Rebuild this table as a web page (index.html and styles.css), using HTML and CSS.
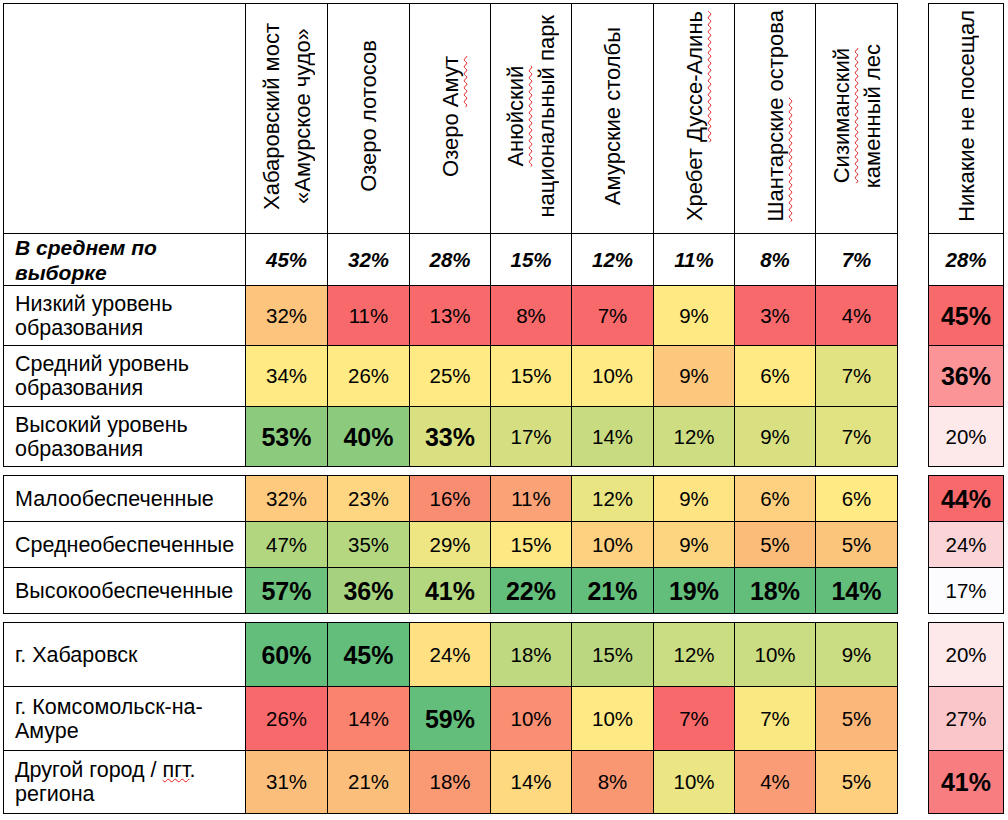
FILE: index.html
```html
<!DOCTYPE html>
<html lang="ru">
<head>
<meta charset="utf-8">
<title>Посещаемость достопримечательностей</title>
<link rel="stylesheet" href="styles.css">
</head>
<body>
<table class="grid">
  <colgroup>
    <col class="c-label">
    <col class="c-w82"><col class="c-w82"><col class="c-w81"><col class="c-w81"><col class="c-w82"><col class="c-w81"><col class="c-w81"><col class="c-w82">
    <col class="c-gap">
    <col class="c-none">
  </colgroup>
  <tr class="r-head">
    <td class="lab"></td>
    <th><div class="vt">Хабаровский мост<br>«Амурское чудо»</div></th>
    <th><div class="vt">Озеро лотосов</div></th>
    <th><div class="vt">Озеро <span class="spell">Амут</span></div></th>
    <th><div class="vt"><span class="spell">Анюйский</span><br>национальный парк</div></th>
    <th><div class="vt">Амурские столбы</div></th>
    <th><div class="vt">Хребет <span class="spell">Дуссе-Алинь</span></div></th>
    <th><div class="vt"><span class="spell">Шантарские</span> острова</div></th>
    <th><div class="vt"><span class="spell">Сизиманский</span><br>каменный лес</div></th>
    <td class="gap"></td>
    <th><div class="vt">Никакие не посещал</div></th>
  </tr>
  <tr class="r-avg">
    <td class="lab avg">В среднем по<br>выборке</td>
    <td class="avgv">45%</td><td class="avgv">32%</td><td class="avgv">28%</td><td class="avgv">15%</td><td class="avgv">12%</td><td class="avgv">11%</td><td class="avgv">8%</td><td class="avgv">7%</td>
    <td class="gap"></td>
    <td class="avgv">28%</td>
  </tr>
  <tr class="r-60">
    <td class="lab">Низкий уровень<br>образования</td>
    <td style="background:#FDC47D">32%</td><td style="background:#F8696B">11%</td><td style="background:#F8696B">13%</td><td style="background:#F8696B">8%</td><td style="background:#F8696B">7%</td><td style="background:#FFE983">9%</td><td style="background:#F8696B">3%</td><td style="background:#F8696B">4%</td>
    <td class="gap"></td>
    <td class="b" style="background:#F8696B">45%</td>
  </tr>
  <tr class="r-61">
    <td class="lab">Средний уровень<br>образования</td>
    <td style="background:#FFEA84">34%</td><td style="background:#FFEA84">26%</td><td style="background:#FFEA84">25%</td><td style="background:#FFEA84">15%</td><td style="background:#FFEA84">10%</td><td style="background:#FDC77D">9%</td><td style="background:#FFEA84">6%</td><td style="background:#E1E383">7%</td>
    <td class="gap"></td>
    <td class="b" style="background:#FA9497">36%</td>
  </tr>
  <tr class="r-60">
    <td class="lab">Высокий уровень<br>образования</td>
    <td class="b" style="background:#8CCA7E">53%</td><td class="b" style="background:#8CCA7E">40%</td><td class="b" style="background:#D9E082">33%</td><td style="background:#D5DF82">17%</td><td style="background:#C9DB81">14%</td><td style="background:#CFDD82">12%</td><td style="background:#D9E082">9%</td><td style="background:#E1E383">7%</td>
    <td class="gap"></td>
    <td style="background:#FDE8EA">20%</td>
  </tr>
  <tr class="r-sp"><td class="sp" colspan="11"></td></tr>
  <tr class="r-46">
    <td class="lab">Малообеспеченные</td>
    <td style="background:#FECB7E">32%</td><td style="background:#FED580">23%</td><td style="background:#F98D72">16%</td><td style="background:#FBA276">11%</td><td style="background:#E9E583">12%</td><td style="background:#FEE482">9%</td><td style="background:#FDD17F">6%</td><td style="background:#FFEA84">6%</td>
    <td class="gap"></td>
    <td class="b" style="background:#F8696B">44%</td>
  </tr>
  <tr class="r-46">
    <td class="lab">Среднеобеспеченные</td>
    <td style="background:#B2D67F">47%</td><td style="background:#B4D780">35%</td><td style="background:#EDE683">29%</td><td style="background:#FEE883">15%</td><td style="background:#FDD17F">10%</td><td style="background:#FDD580">9%</td><td style="background:#FBBC7A">5%</td><td style="background:#FCC57C">5%</td>
    <td class="gap"></td>
    <td style="background:#FBD4D7">24%</td>
  </tr>
  <tr class="r-46">
    <td class="lab">Высокообеспеченные</td>
    <td class="b" style="background:#6CC17C">57%</td><td class="b" style="background:#A6D27F">36%</td><td class="b" style="background:#B3D77F">41%</td><td class="b" style="background:#63BE7B">22%</td><td class="b" style="background:#63BE7B">21%</td><td class="b" style="background:#63BE7B">19%</td><td class="b" style="background:#63BE7B">18%</td><td class="b" style="background:#63BE7B">14%</td>
    <td class="gap"></td>
    <td style="background:#FCFCFF">17%</td>
  </tr>
  <tr class="r-sp"><td class="sp" colspan="11"></td></tr>
  <tr class="r-64">
    <td class="lab">г. Хабаровск</td>
    <td class="b" style="background:#63BE7B">60%</td><td class="b" style="background:#63BE7B">45%</td><td style="background:#FFE082">24%</td><td style="background:#BFD980">18%</td><td style="background:#BBD880">15%</td><td style="background:#CBDD82">12%</td><td style="background:#CBDD82">10%</td><td style="background:#CBDD82">9%</td>
    <td class="gap"></td>
    <td style="background:#FDE8EA">20%</td>
  </tr>
  <tr class="r-64">
    <td class="lab">г. Комсомольск-на-<br>Амуре</td>
    <td style="background:#F8696B">26%</td><td style="background:#F9836F">14%</td><td class="b" style="background:#63BE7B">59%</td><td style="background:#F98E72">10%</td><td style="background:#FFE984">10%</td><td style="background:#F8696B">7%</td><td style="background:#FAE883">7%</td><td style="background:#FBB77A">5%</td>
    <td class="gap"></td>
    <td style="background:#FBC6C9">27%</td>
  </tr>
  <tr class="r-63">
    <td class="lab">Другой город / <span class="spell">пгт</span>.<br>региона</td>
    <td style="background:#FCBF7B">31%</td><td style="background:#FCBF7B">21%</td><td style="background:#FA9A75">18%</td><td style="background:#FED980">14%</td><td style="background:#FA9773">8%</td><td style="background:#EBE583">10%</td><td style="background:#FA9C75">4%</td><td style="background:#FDCF7F">5%</td>
    <td class="gap"></td>
    <td class="b" style="background:#F87D80">41%</td>
  </tr>
</table>
</body>
</html>
```

FILE: styles.css
```css
html, body {
  margin: 0;
  background: #ffffff;
}

body {
  padding: 3px;
  font-family: "Liberation Sans", Arial, sans-serif;
  color: #000000;
}

.grid {
  border-collapse: collapse;
  table-layout: fixed;
  width: 1000px;
}

.c-label { width: 242px; }
.c-w82 { width: 82px; }
.c-w81 { width: 81px; }
.c-gap { width: 31px; }
.c-none { width: 75px; }

.grid td,
.grid th {
  border: 1px solid #000000;
  padding: 0;
  text-align: center;
  vertical-align: middle;
  font-weight: normal;
  font-size: 20.5px;
  line-height: 24px;
}

.grid td.gap,
.grid td.sp {
  border: none;
  padding: 0;
}

.grid td.lab {
  text-align: left;
  padding: 0 4px 0 11px;
  font-size: 21.5px;
  line-height: 24px;
}

.grid td.avg {
  font-weight: bold;
  font-style: italic;
  font-size: 21px;
  line-height: 25px;
}

.grid td.avgv {
  font-weight: bold;
  font-style: italic;
  font-size: 20.5px;
}

.grid td.b {
  font-weight: bold;
  font-size: 25px;
}

.vt {
  display: inline-block;
  writing-mode: vertical-rl;
  transform: rotate(180deg);
  font-size: 22px;
  line-height: 31px;
  text-align: center;
  white-space: nowrap;
}

.spell {
  text-decoration: underline wavy #e21b1b;
  text-decoration-thickness: 1px;
  text-underline-offset: 1px;
}

.r-head td, .r-head th { height: 229px; }
.r-avg td { height: 51px; }
.r-60 td { height: 59px; }
.r-61 td { height: 60px; }
.r-sp td { height: 8px; }
.r-46 td { height: 45px; }
.r-64 td { height: 63px; }
.r-63 td { height: 62px; }
```
